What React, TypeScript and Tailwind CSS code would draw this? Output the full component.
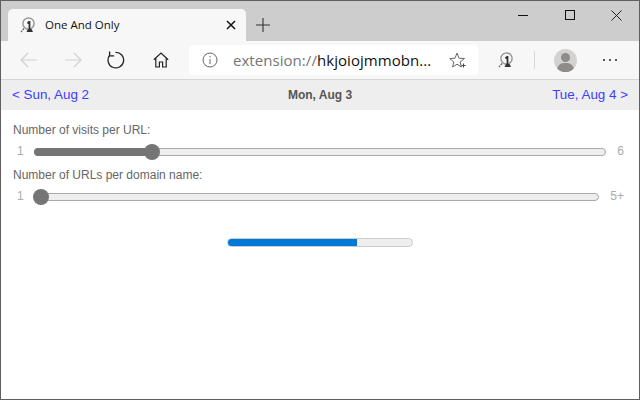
import React from "react";

function Favicon({ size = 18 }: { size?: number }) {
  return (
    <svg width={size} height={size} viewBox="0 0 18 18" fill="none">
      <circle cx="9.5" cy="7.5" r="5.6" stroke="#9a9a9a" strokeWidth="1.5" />
      <path d="M5 12.5 L2 16" stroke="#666" strokeWidth="1.3" strokeDasharray="2 1" />
      <path d="M10.5 5 L10.5 13 M8.5 7.5 L10.5 5.5" stroke="#333" strokeWidth="1.8" />
      <path d="M7.5 16 H14 L12.5 13 H9 Z" fill="#333" />
    </svg>
  );
}

function Slider({ end, pct, endW }: { end: string; pct: number; endW: string }) {
  const filled = pct > 0;
  return (
    <div className="flex h-[16px] items-center">
      <span className="w-[21px] shrink-0 pl-[4px] text-[12px] leading-[14px] text-[#aaaaaa] -translate-y-px">1</span>
      <div className="relative h-[8px] flex-1 rounded-full border border-[#aaaaaa] bg-[#eeeeee]">
        {filled && (
          <div className="absolute -left-px -top-px h-[8px] rounded-l-full bg-[#757575]" style={{ width: `${pct}%` }} />
        )}
        <div
          className="absolute top-1/2 h-[16px] w-[16px] -translate-y-1/2 rounded-full bg-[#757575]"
          style={{ left: filled ? `calc(${pct}% - 8px)` : "-2px" }}
        />
      </div>
      <span className={`${endW} shrink-0 text-right text-[12px] leading-[14px] text-[#aaaaaa] -translate-y-px`}>{end}</span>
    </div>
  );
}

export default function App() {
  return (
    <div className="flex h-[400px] w-[640px] flex-col overflow-hidden border border-[#5f5f5f] bg-white font-['Liberation_Sans',sans-serif]">
      {/* Tab strip */}
      <div className="flex h-[40px] shrink-0 items-end bg-[#cdcdcd] pl-[7px]">
        <div className="flex h-[32px] w-[238px] items-center rounded-t-[5px] bg-[#f7f7f7] pl-[11px] pr-[10px]">
          <Favicon />
          <span className="ml-[8px] flex-1 font-['Open_Sans',sans-serif] text-[11.5px] text-[#111111]">One And Only</span>
          <svg width="10" height="10" viewBox="0 0 10 10" stroke="#111" strokeWidth="1.5">
            <path d="M1 1 L9 9 M9 1 L1 9" />
          </svg>
        </div>
        <div className="ml-[7px] flex h-[32px] w-[20px] items-center justify-center">
          <svg width="14" height="14" viewBox="0 0 14 14" stroke="#333" strokeWidth="1.1">
            <path d="M7 0 V14 M0 7 H14" />
          </svg>
        </div>
        <div className="ml-auto flex h-[40px] self-start">
          <div className="mr-[1px] flex w-[46px] items-start justify-center pt-[14px]">
            <div className="h-px w-[10px] bg-[#111111]" />
          </div>
          <div className="flex w-[46px] items-start justify-center pt-[9px]">
            <div className="h-[10px] w-[10px] border border-[#111111]" />
          </div>
          <div className="flex w-[46px] items-start justify-center pt-[9px]">
            <svg width="11" height="11" viewBox="0 0 11 11" stroke="#222" strokeWidth="1">
              <path d="M.5 .5 L10.5 10.5 M10.5 .5 L.5 10.5" />
            </svg>
          </div>
        </div>
      </div>

      {/* Toolbar */}
      <div className="flex h-[39px] shrink-0 items-center border-b border-[#d6d6d6] bg-[#f7f7f7]">
        <div className="ml-[19px] flex w-[44px]">
          <svg width="18" height="16" viewBox="0 0 18 16" fill="none" stroke="#d2d2d2" strokeWidth="1.2">
            <path d="M17 8 H1 M8 1 L1 8 L8 15" />
          </svg>
        </div>
        <svg width="18" height="16" viewBox="0 0 18 16" fill="none" stroke="#d2d2d2" strokeWidth="1.2">
          <path d="M1 8 H17 M10 1 L17 8 L10 15" />
        </svg>
        <svg className="ml-[25px]" width="18" height="18" viewBox="0 0 18 18" fill="none" stroke="#222" strokeWidth="1.3">
          <path d="M8.5 1.3 A7.8 7.8 0 1 1 2.6 4.4" />
          <path d="M2.6 .4 V4.9 H7.1" />
        </svg>
        <svg className="ml-[28px]" width="16" height="16" viewBox="0 0 16 16" fill="none" stroke="#222" strokeWidth="1.2">
          <path d="M.8 7.8 L8 1 L15.2 7.8 M2.8 6.2 V15 H6.4 V10 H9.6 V15 H13.2 V6.2" />
        </svg>
        <div className="ml-[20px] flex h-[30px] w-[289px] items-center rounded-[4px] bg-white">
          <svg className="ml-[13px]" width="16" height="16" viewBox="0 0 16 16" fill="none" stroke="#666" strokeWidth="1">
            <circle cx="8" cy="8" r="7" />
            <path d="M8 7 V12 M8 4 V5.4" />
          </svg>
          <span className="ml-[15px] w-[208px] whitespace-nowrap font-['Open_Sans',sans-serif] text-[15px] leading-[20px] tracking-[0.05px] text-[#111111]">
            <span className="text-[#767676]">extension://</span>hkjoiojmmobn...
          </span>
          <svg className="ml-[8px]" width="17" height="17" viewBox="0 0 17 17" fill="none" stroke="#666" strokeWidth="1">
            <path d="M8 1 L10 6.2 L15.5 6.5 L11.2 10 L12.4 15 L8 12.2 L3.6 15 L4.8 10 L.8 6.5 L6 6.2 Z" />
            <path d="M12.5 13.5 H16.5 M14.5 11.5 V15.5" stroke="#444" />
          </svg>
        </div>
        <div className="ml-[19px]">
          <Favicon />
        </div>
        <div className="ml-[19px] h-[18px] w-px bg-[#d8d8d8]" />
        <div className="relative ml-[19px] h-[23px] w-[23px] overflow-hidden rounded-full bg-[#d4d2d0]">
          <div className="absolute left-[7px] top-[4px] h-[9px] w-[9px] rounded-full bg-[#8e8b88]" />
          <div className="absolute left-[3px] top-[14px] h-[14px] w-[17px] rounded-full bg-[#8e8b88]" />
        </div>
        <div className="ml-[26px] flex gap-[4px]">
          <div className="h-[2px] w-[2px] rounded-full bg-[#222222]" />
          <div className="h-[2px] w-[2px] rounded-full bg-[#222222]" />
          <div className="h-[2px] w-[2px] rounded-full bg-[#222222]" />
        </div>
      </div>

      {/* Date nav */}
      <div className="flex h-[30px] shrink-0 items-center justify-between bg-[#eeeeee] px-[11px]">
        <span className="w-[120px] text-[13.4px] text-[#3d3dff]">&lt; Sun, Aug 2</span>
        <span className="text-[12px] font-bold text-[#555555]">Mon, Aug 3</span>
        <span className="w-[120px] text-right text-[13.4px] text-[#3d3dff]">Tue, Aug 4 &gt;</span>
      </div>

      {/* Content */}
      <div className="flex flex-col pl-[12px] pr-[15px] pt-[13px]">
        <div className="mb-[7px] text-[12px] leading-[14px] text-[#666666]">Number of visits per URL:</div>
        <Slider end="6" pct={20.5} endW="w-[18px]" />
        <div className="mb-[7px] mt-[8px] text-[12px] leading-[14px] text-[#666666]">Number of URLs per domain name:</div>
        <Slider end="5+" pct={0} endW="w-[25px]" />
        <div className="mt-[33px] flex justify-center pl-[2px]">
          <div className="h-[9px] w-[186px] overflow-hidden rounded-full border border-[#cccccc] bg-[#eeeeee]">
            <div className="-ml-px -mt-px h-[9px] w-[130px] bg-[#0078d7]" />
          </div>
        </div>
      </div>
    </div>
  );
}
